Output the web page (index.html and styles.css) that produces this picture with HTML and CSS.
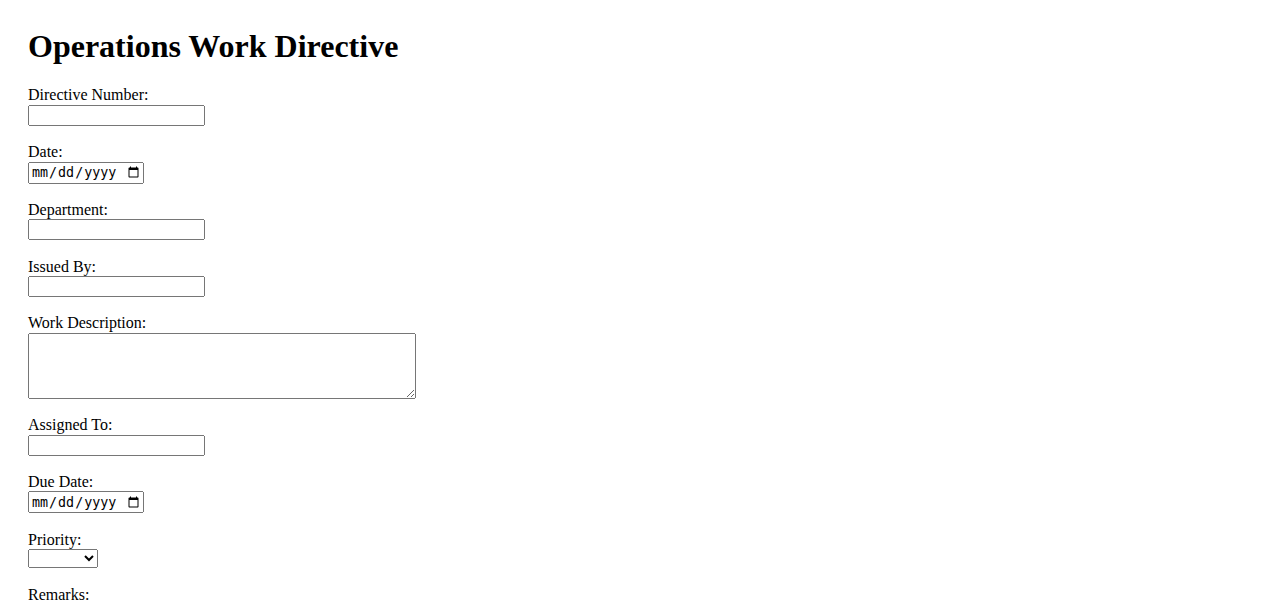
FILE: index.html
```html
<!DOCTYPE html>
<html lang="en">
<head>
<meta charset="utf-8">
<title>Operations Work Directive</title>
<link rel="stylesheet" href="styles.css">
</head>
<body>
<main class="page">
  <h1 class="title">Operations Work Directive</h1>
  <form class="form">
    <div class="field">
      <label class="label" for="num">Directive Number:</label>
      <input class="text-input" type="text" id="num">
    </div>
    <div class="field">
      <label class="label" for="date">Date:</label>
      <input class="date-input" type="date" id="date">
    </div>
    <div class="field">
      <label class="label" for="dept">Department:</label>
      <input class="text-input" type="text" id="dept">
    </div>
    <div class="field">
      <label class="label" for="issued">Issued By:</label>
      <input class="text-input" type="text" id="issued">
    </div>
    <div class="field">
      <label class="label" for="desc">Work Description:</label>
      <textarea class="area" id="desc"></textarea>
    </div>
    <div class="field">
      <label class="label" for="assigned">Assigned To:</label>
      <input class="text-input" type="text" id="assigned">
    </div>
    <div class="field">
      <label class="label" for="due">Due Date:</label>
      <input class="date-input" type="date" id="due">
    </div>
    <div class="field">
      <label class="label" for="priority">Priority:</label>
      <select class="select" id="priority">
        <option value=""></option>
        <option>Low</option>
        <option>Medium</option>
        <option>High</option>
      </select>
    </div>
    <div class="field">
      <label class="label" for="remarks">Remarks:</label>
      <textarea class="area" id="remarks"></textarea>
    </div>
  </form>
</main>
</body>
</html>
```
FILE: styles.css
```css
html, body {
  margin: 0;
  padding: 0;
  background: #ffffff;
}

body {
  font-family: "Liberation Serif", "Times New Roman", serif;
  font-size: 16px;
  color: #000000;
}

.page {
  padding: 28px 28px 28px 28px;
}

.title {
  margin: 0 0 21.5px 0;
  font-size: 32px;
  font-weight: bold;
  line-height: 36.8px;
}

.form {
  display: flex;
  flex-direction: column;
  align-items: flex-start;
  gap: 17.4px;
}

.field {
  display: flex;
  flex-direction: column;
  align-items: flex-start;
}

.label {
  display: block;
  line-height: 18.4px;
}

.text-input {
  box-sizing: border-box;
  width: 177px;
  height: 21px;
  margin: 0;
}

.date-input {
  box-sizing: border-box;
  width: 116px;
  height: 22px;
  margin: 0;
}

.area {
  box-sizing: border-box;
  width: 388px;
  height: 66px;
  margin: 0;
}

.select {
  box-sizing: border-box;
  width: 70px;
  height: 19px;
  margin: 0;
}
```
